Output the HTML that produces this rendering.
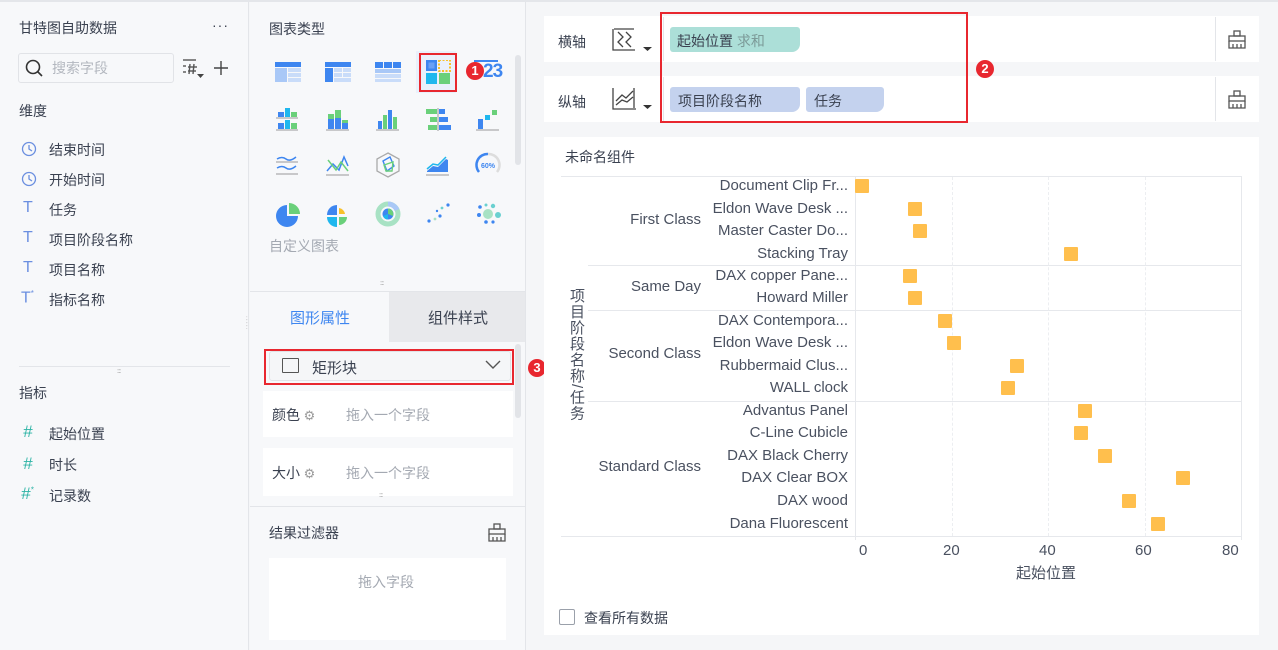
<!DOCTYPE html>
<html><head><meta charset="utf-8"><style>
*{margin:0;padding:0;box-sizing:border-box}
body{width:1278px;height:650px;overflow:hidden;background:#f5f6f8;font-family:"Liberation Sans","Noto Sans CJK SC",sans-serif;color:#3a4150;font-size:14px;position:relative}
.a{position:absolute;white-space:nowrap}
.g{color:#9aa0aa}
.ic{position:absolute}
.sq{position:absolute;width:14px;height:14px;background:#ffbf4d;border-radius:1px}
.yl{position:absolute;right:0;font-size:15px;color:#4a5160;text-align:right;line-height:18px}
</style></head><body>
<div class="a" style="left:0;top:0;width:1278px;height:2px;background:#e4e6ea"></div>
<!-- LEFT PANEL -->
<div class="a" style="left:0;top:2px;width:249px;height:648px;background:#f7f8fa;border-right:1px solid #e3e5e9"></div>
<div class="a" style="left:19px;top:18px;font-size:14px">甘特图自助数据</div>
<div class="a" style="left:212px;top:20px;font-size:14px;letter-spacing:1px;line-height:10px">···</div>
<div class="a" style="left:18px;top:53px;width:156px;height:30px;border:1px solid #e1e3e7;border-radius:3px;background:#f7f8fa"></div>
<svg class="ic" style="left:24px;top:58px" width="20" height="20"><circle cx="9" cy="9" r="6.5" fill="none" stroke="#333" stroke-width="1.6"/><line x1="13.5" y1="13.5" x2="18" y2="18" stroke="#333" stroke-width="1.6"/></svg>
<div class="a g" style="left:52px;top:58px;color:#b3b7bf">搜索字段</div>
<svg class="ic" style="left:182px;top:58px" width="26" height="22"><g stroke="#555" stroke-width="1.4"><line x1="1" y1="2" x2="14" y2="2"/><line x1="1" y1="8" x2="4" y2="8"/><line x1="1" y1="14" x2="4" y2="14"/><line x1="8" y1="6" x2="7" y2="16"/><line x1="12" y1="6" x2="11" y2="16"/><line x1="6" y1="9" x2="15" y2="9"/><line x1="6" y1="13" x2="14" y2="13"/></g><path d="M15 16h7l-3.5 4z" fill="#444"/></svg>
<svg class="ic" style="left:213px;top:60px" width="16" height="16"><path d="M8 1v14M1 8h14" stroke="#444" stroke-width="1.4"/></svg>
<div class="a" style="left:19px;top:101px">维度</div>
<svg class="ic" style="left:21px;top:141px" width="16" height="16"><circle cx="8" cy="8" r="6.5" fill="none" stroke="#6b8fe0" stroke-width="1.3"/><path d="M8 4v4l3 2" fill="none" stroke="#6b8fe0" stroke-width="1.3"/></svg>
<div class="a" style="left:49px;top:140px">结束时间</div>
<svg class="ic" style="left:21px;top:171px" width="16" height="16"><circle cx="8" cy="8" r="6.5" fill="none" stroke="#6b8fe0" stroke-width="1.3"/><path d="M8 4v4l3 2" fill="none" stroke="#6b8fe0" stroke-width="1.3"/></svg>
<div class="a" style="left:49px;top:170px">开始时间</div>
<div class="a" style="left:23px;top:199px;color:#6b8fe0;font-size:16px">T</div><div class="a" style="left:49px;top:200px">任务</div>
<div class="a" style="left:23px;top:229px;color:#6b8fe0;font-size:16px">T</div><div class="a" style="left:49px;top:230px">项目阶段名称</div>
<div class="a" style="left:23px;top:259px;color:#6b8fe0;font-size:16px">T</div><div class="a" style="left:49px;top:260px">项目名称</div>
<div class="a" style="left:21px;top:289px;color:#6b8fe0;font-size:16px">T<sup style="font-size:8px">*</sup></div><div class="a" style="left:49px;top:290px">指标名称</div>
<div class="a" style="left:19px;top:366px;width:211px;height:1px;background:#e3e5e9"></div>
<div class="a" style="left:117px;top:369px;font-size:6px;color:#999;letter-spacing:-1px">:::::</div>
<div class="a" style="left:19px;top:383px">指标</div>
<div class="a" style="left:23px;top:422px;color:#2db3a5;font-style:italic;font-size:17px">#</div><div class="a" style="left:49px;top:424px">起始位置</div>
<div class="a" style="left:23px;top:454px;color:#2db3a5;font-style:italic;font-size:17px">#</div><div class="a" style="left:49px;top:455px">时长</div>
<div class="a" style="left:21px;top:484px;color:#2db3a5;font-style:italic;font-size:17px">#<sup style="font-size:8px">*</sup></div><div class="a" style="left:49px;top:486px">记录数</div>
<div class="a" style="left:246px;top:318px;font-size:6px;color:#999;line-height:3px">:<br>:<br>:<br>:</div>

<!-- MIDDLE PANEL -->
<div class="a" style="left:250px;top:2px;width:276px;height:648px;background:#f7f8fa;border-right:1px solid #e3e5e9"></div>
<div class="a" style="left:269px;top:19px">图表类型</div>
<div class="a" style="left:515px;top:55px;width:6px;height:110px;background:#e2e4e8;border-radius:3px"></div>
<svg class="ic" style="left:275px;top:60px" width="28" height="24"><rect x="0" y="2" width="26" height="5" fill="#3e86f0"/><rect x="0" y="8" width="12" height="14" fill="#a9c8f7"/><rect x="13" y="8" width="13" height="4" fill="#c9dcf9"/><rect x="13" y="13" width="13" height="4" fill="#c9dcf9"/><rect x="13" y="18" width="13" height="4" fill="#c9dcf9"/></svg>
<svg class="ic" style="left:325px;top:60px" width="28" height="24"><rect x="0" y="2" width="26" height="5" fill="#3e86f0"/><rect x="0" y="8" width="8" height="14" fill="#3e86f0"/><rect x="9" y="8" width="8" height="4" fill="#c9dcf9"/><rect x="18" y="8" width="8" height="4" fill="#c9dcf9"/><rect x="9" y="13" width="8" height="4" fill="#c9dcf9"/><rect x="18" y="13" width="8" height="4" fill="#c9dcf9"/><rect x="9" y="18" width="17" height="4" fill="#c9dcf9"/></svg>
<svg class="ic" style="left:375px;top:60px" width="28" height="24"><rect x="0" y="2" width="8" height="6" fill="#3e86f0"/><rect x="9" y="2" width="8" height="6" fill="#3e86f0"/><rect x="18" y="2" width="8" height="6" fill="#3e86f0"/><rect x="0" y="9" width="26" height="4" fill="#a9c8f7"/><rect x="0" y="14" width="26" height="4" fill="#c9dcf9"/><rect x="0" y="19" width="26" height="3" fill="#c9dcf9"/></svg>
<div class="a" style="left:416px;top:51px;width:40px;height:42px;background:#eaf0fb"></div>
<div class="a" style="left:419px;top:53px;width:38px;height:39px;border:2px solid #e8272f"></div>
<svg class="ic" style="left:426px;top:60px" width="26" height="26"><rect x="0" y="0" width="11" height="11" fill="#3e86f0"/><rect x="2.5" y="2.5" width="6" height="6" fill="#6aa0f5"/><rect x="13" y="0" width="11" height="11" fill="none" stroke="#f8c12a" stroke-width="2" stroke-dasharray="2 1.5"/><rect x="0" y="13" width="11" height="11" fill="#1fb7ee"/><rect x="13" y="13" width="11" height="11" fill="#6ad07a"/></svg>
<div class="a" style="left:466px;top:62px;width:18px;height:18px;border-radius:50%;background:#e8272f;color:#fff;font-size:13px;text-align:center;line-height:18px;font-weight:bold">1</div>
<div class="a" style="left:474px;top:60px;width:24px;height:2px;background:#3e86f0"></div>
<div class="a" style="left:483px;top:61px;color:#3e86f0;font-weight:bold;font-size:19px;letter-spacing:-1px">23</div>
<svg class="ic" style="left:276px;top:108px" width="26" height="24"><rect x="2" y="4" width="6" height="5" fill="#3e86f0"/><rect x="9" y="0" width="5" height="9" fill="#1fb7ee"/><rect x="15" y="4" width="6" height="5" fill="#6ad07a"/><line x1="0" y1="10" x2="22" y2="10" stroke="#999"/><rect x="2" y="15" width="6" height="6" fill="#3e86f0"/><rect x="9" y="12" width="5" height="9" fill="#1fb7ee"/><rect x="15" y="15" width="6" height="6" fill="#6ad07a"/><line x1="0" y1="22" x2="22" y2="22" stroke="#999"/></svg>
<svg class="ic" style="left:326px;top:108px" width="26" height="24"><rect x="2" y="6" width="6" height="15" fill="#3e86f0"/><rect x="2" y="6" width="6" height="5" fill="#6ad07a"/><rect x="9" y="2" width="6" height="19" fill="#3e86f0"/><rect x="9" y="2" width="6" height="8" fill="#6ad07a"/><rect x="16" y="12" width="6" height="9" fill="#3e86f0"/><rect x="16" y="12" width="6" height="3" fill="#6ad07a"/><line x1="0" y1="22" x2="23" y2="22" stroke="#999"/></svg>
<svg class="ic" style="left:376px;top:108px" width="26" height="24"><rect x="2" y="13" width="4" height="8" fill="#3e86f0"/><rect x="7" y="7" width="4" height="14" fill="#6ad07a"/><rect x="12" y="2" width="4" height="19" fill="#3e86f0"/><rect x="17" y="9" width="4" height="12" fill="#6ad07a"/><line x1="0" y1="22" x2="23" y2="22" stroke="#999"/></svg>
<svg class="ic" style="left:426px;top:108px" width="26" height="24"><rect x="0" y="1" width="11" height="5" fill="#6ad07a"/><rect x="4" y="9" width="7" height="5" fill="#6ad07a"/><rect x="2" y="17" width="9" height="5" fill="#6ad07a"/><line x1="12" y1="0" x2="12" y2="23" stroke="#999"/><rect x="13" y="1" width="6" height="5" fill="#3e86f0"/><rect x="13" y="9" width="9" height="5" fill="#3e86f0"/><rect x="13" y="17" width="12" height="5" fill="#3e86f0"/></svg>
<svg class="ic" style="left:476px;top:108px" width="26" height="24"><rect x="2" y="11" width="5" height="10" fill="#3e86f0"/><rect x="9" y="7" width="5" height="5" fill="#1fb7ee"/><rect x="16" y="2" width="5" height="5" fill="#6ad07a"/><line x1="0" y1="22" x2="23" y2="22" stroke="#999"/></svg>
<svg class="ic" style="left:276px;top:154px" width="26" height="26"><path d="M1 5 Q6 2 10 5 T20 3M1 14 Q6 11 10 14 T20 12" fill="none" stroke="#3e86f0" stroke-width="1.5"/><line x1="0" y1="8" x2="22" y2="8" stroke="#999"/><line x1="0" y1="20" x2="22" y2="20" stroke="#999"/></svg>
<svg class="ic" style="left:326px;top:154px" width="26" height="26"><path d="M1 17 L7 10 L13 16 L18 3 L22 12" fill="none" stroke="#3e86f0" stroke-width="1.5"/><path d="M2 6 L10 16 L15 8 L22 17" fill="none" stroke="#6ad07a" stroke-width="1.5"/><line x1="0" y1="21" x2="23" y2="21" stroke="#999"/></svg>
<svg class="ic" style="left:375px;top:151px" width="26" height="28"><path d="M13 2 L24 8 L24 20 L13 26 L2 20 L2 8Z" fill="none" stroke="#aaa" stroke-width="1.3"/><path d="M8 10 L15 6 L19 15 L12 20Z" fill="none" stroke="#3e86f0" stroke-width="1.4"/><path d="M9 14 L18 11 L17 20 L11 20Z" fill="none" stroke="#6ad07a" stroke-width="1.4"/></svg>
<svg class="ic" style="left:426px;top:154px" width="26" height="24"><path d="M1 17 L7 12 L12 13 L20 5 L22 6 L22 18 L1 18Z" fill="#3e86f0"/><path d="M1 15 L7 10 L12 11 L20 3" fill="none" stroke="#1fb7ee" stroke-width="1.5"/><line x1="0" y1="21" x2="23" y2="21" stroke="#999"/></svg>
<svg class="ic" style="left:474px;top:151px" width="28" height="28"><path d="M5 21 A11 11 0 0 1 14 3" fill="none" stroke="#3e86f0" stroke-width="2.5"/><path d="M14 3 A11 11 0 0 1 23 21" fill="none" stroke="#ddd" stroke-width="2.5"/><text x="14" y="17" font-size="7" font-weight="bold" fill="#3e86f0" text-anchor="middle" font-family="Liberation Sans">60%</text></svg>
<svg class="ic" style="left:275px;top:202px" width="26" height="26"><path d="M12 3 A11 11 0 1 0 23 14 L12 14Z" fill="#3e86f0"/><path d="M14 1 A11 11 0 0 1 25 12 L14 12Z" fill="#6ad07a"/></svg>
<svg class="ic" style="left:325px;top:202px" width="26" height="26"><path d="M12 3 A10 10 0 0 0 2 13 L12 13Z" fill="#3e86f0"/><path d="M14 6 A7 7 0 0 1 20 12 L14 12Z" fill="#f8c12a"/><path d="M2 15 A10 10 0 0 0 12 25 L12 15Z" fill="#1fb7ee"/><path d="M14 15 L22 15 A8 8 0 0 1 14 23Z" fill="#6ad07a"/></svg>
<svg class="ic" style="left:375px;top:201px" width="26" height="26"><circle cx="13" cy="13" r="10" fill="none" stroke="#a8e2c4" stroke-width="5"/><path d="M13 3 A10 10 0 0 1 22 9" fill="none" stroke="#a9c8f7" stroke-width="5"/><circle cx="13" cy="13" r="5.5" fill="#3e86f0"/><path d="M13 13 L13 7.5 A5.5 5.5 0 0 1 18 15Z" fill="#6ad07a"/><path d="M13 13 L8 15 A5.5 5.5 0 0 0 13 18.5Z" fill="#1fb7ee"/></svg>
<svg class="ic" style="left:426px;top:203px" width="26" height="22"><g fill="#3e86f0"><circle cx="3" cy="18" r="1.6"/><circle cx="14" cy="13" r="1.6"/><circle cx="22" cy="2" r="1.6"/><circle cx="16" cy="5" r="1.4" fill="#6ad0d0"/><circle cx="9" cy="16" r="1.4" fill="#a8e2c4"/><circle cx="11" cy="8" r="1.2"/></g></svg>
<svg class="ic" style="left:476px;top:202px" width="26" height="24"><g fill="#3e86f0"><circle cx="4" cy="5" r="1.8"/><circle cx="3" cy="13" r="2"/><circle cx="10" cy="20" r="1.8"/><circle cx="17" cy="20" r="1.6"/><circle cx="10" cy="3" r="1.5" fill="#6ad0d0"/><circle cx="17" cy="4" r="2.2" fill="#6ad0d0"/><circle cx="22" cy="13" r="3" fill="#6ad0d0"/><circle cx="12" cy="12" r="5" fill="#a8e2c4"/></g></svg>
<div class="a" style="left:269px;top:236px;color:#a4a9b2">自定义图表</div>
<div class="a" style="left:380px;top:281px;font-size:6px;color:#999;letter-spacing:-1px">:::::</div>
<div class="a" style="left:250px;top:291px;width:276px;height:1px;background:#e3e5e9"></div>
<div class="a" style="left:389px;top:292px;width:136px;height:50px;background:#e8e9ec"></div>
<div class="a" style="left:290px;top:307px;color:#3e86f0;font-size:15px">图形属性</div>
<div class="a" style="left:428px;top:307px;font-size:15px">组件样式</div>
<div class="a" style="left:515px;top:344px;width:6px;height:74px;background:#e2e4e8;border-radius:3px"></div>
<div class="a" style="left:269px;top:351px;width:242px;height:30px;background:#f5f6f8;border:1px solid #e1e3e7;border-radius:3px"></div>
<div class="a" style="left:264px;top:349px;width:250px;height:36px;border:2px solid #e8272f"></div>
<div class="a" style="left:282px;top:358px;width:17px;height:15px;border:1.5px solid #555;border-radius:1px"></div>
<div class="a" style="left:312px;top:357px;font-size:15px">矩形块</div>
<svg class="ic" style="left:485px;top:360px" width="16" height="10"><path d="M1 1 L8 8 L15 1" fill="none" stroke="#555" stroke-width="1.4"/></svg>
<div class="a" style="left:528px;top:359px;width:18px;height:18px;border-radius:50%;background:#e8272f;color:#fff;font-size:13px;text-align:center;line-height:18px;font-weight:bold">3</div>
<div class="a" style="left:263px;top:391px;width:250px;height:46px;background:#fff"></div>
<div class="a" style="left:272px;top:405px">颜色<span style="color:#999;font-size:13px"> ⚙</span></div>
<div class="a" style="left:346px;top:405px;color:#a4a9b2">拖入一个字段</div>
<div class="a" style="left:263px;top:448px;width:250px;height:48px;background:#fff"></div>
<div class="a" style="left:272px;top:463px">大小<span style="color:#999;font-size:13px"> ⚙</span></div>
<div class="a" style="left:346px;top:463px;color:#a4a9b2">拖入一个字段</div>
<div class="a" style="left:379px;top:493px;font-size:6px;color:#999;letter-spacing:-1px">:::::</div>
<div class="a" style="left:250px;top:506px;width:276px;height:1px;background:#e3e5e9"></div>
<div class="a" style="left:269px;top:523px">结果过滤器</div>
<svg class="ic" style="left:487px;top:523px" width="20" height="20"><g fill="none" stroke="#555" stroke-width="1.3"><rect x="7" y="1" width="6" height="5"/><rect x="2" y="6" width="16" height="5"/><path d="M2 11v7h16v-7M6 14v4M10 14v4M14 14v4"/></g></svg>
<div class="a" style="left:269px;top:558px;width:237px;height:82px;background:#fff"></div>
<div class="a" style="left:358px;top:572px;color:#a4a9b2">拖入字段</div>

<!-- RIGHT TOP CARDS -->
<div class="a" style="left:544px;top:16px;width:715px;height:46px;background:#fff"></div>
<div class="a" style="left:544px;top:76px;width:715px;height:46px;background:#fff"></div>
<div class="a" style="left:558px;top:32px">横轴</div>
<div class="a" style="left:558px;top:92px">纵轴</div>
<svg class="ic" style="left:612px;top:28px" width="42" height="26"><g fill="none" stroke="#444" stroke-width="1.3"><path d="M1 1 V22 H23"/><path d="M6 4 L11 9 L6 14 L11 19"/><path d="M14 4 L19 9 L14 14 L19 19"/><path d="M2 1h20"/></g><path d="M31 19 h9 l-4.5 4z" fill="#333"/></svg>
<svg class="ic" style="left:612px;top:87px" width="42" height="26"><g fill="none" stroke="#444" stroke-width="1.3"><path d="M1 1 V22 H24"/><path d="M4 14 L10 8 L14 11 L21 4"/><path d="M4 18 L10 13 L15 15 L21 10"/><path d="M22 1 v20"/></g><path d="M31 18 h9 l-4.5 4z" fill="#333"/></svg>
<div class="a" style="left:663px;top:17px;width:1px;height:44px;background:#e3e5e9"></div>
<div class="a" style="left:663px;top:77px;width:1px;height:44px;background:#e3e5e9"></div>
<div class="a" style="left:670px;top:27px;width:130px;height:25px;background:#acdfd8;border-radius:3px 3px 8px 3px"></div>
<div class="a" style="left:677px;top:31px">起始位置 <span style="color:#7c9a98">求和</span></div>
<div class="a" style="left:670px;top:87px;width:130px;height:25px;background:#c4d2ee;border-radius:3px 3px 8px 3px"></div>
<div class="a" style="left:678px;top:91px">项目阶段名称</div>
<div class="a" style="left:806px;top:87px;width:78px;height:25px;background:#c4d2ee;border-radius:3px 3px 8px 3px"></div>
<div class="a" style="left:814px;top:91px">任务</div>
<div class="a" style="left:660px;top:12px;width:308px;height:111px;border:2px solid #e8272f"></div>
<div class="a" style="left:976px;top:60px;width:18px;height:18px;border-radius:50%;background:#e8272f;color:#fff;font-size:13px;text-align:center;line-height:18px;font-weight:bold">2</div>
<div class="a" style="left:1215px;top:17px;width:1px;height:44px;background:#e3e5e9"></div>
<div class="a" style="left:1215px;top:77px;width:1px;height:44px;background:#e3e5e9"></div>
<svg class="ic" style="left:1227px;top:30px" width="20" height="20"><g fill="none" stroke="#555" stroke-width="1.3"><rect x="7" y="1" width="6" height="5"/><rect x="2" y="6" width="16" height="5"/><path d="M2 11v7h16v-7M6 14v4M10 14v4M14 14v4"/></g></svg>
<svg class="ic" style="left:1227px;top:90px" width="20" height="20"><g fill="none" stroke="#555" stroke-width="1.3"><rect x="7" y="1" width="6" height="5"/><rect x="2" y="6" width="16" height="5"/><path d="M2 11v7h16v-7M6 14v4M10 14v4M14 14v4"/></g></svg>

<!-- CHART CARD -->
<div class="a" style="left:544px;top:137px;width:715px;height:498px;background:#fff"></div>
<div class="a" style="left:565px;top:147px">未命名组件</div>
<div class="a" style="left:561px;top:176px;width:681px;height:1px;background:#e6e8ec"></div>
<div class="a" style="left:561px;top:536px;width:681px;height:1px;background:#e6e8ec"></div>
<div class="a" style="left:588px;top:265px;width:654px;height:1px;background:#e6e8ec"></div>
<div class="a" style="left:588px;top:310px;width:654px;height:1px;background:#e6e8ec"></div>
<div class="a" style="left:588px;top:401px;width:654px;height:1px;background:#e6e8ec"></div>
<div class="a" style="left:855px;top:176px;width:1px;height:364px;background:#e6e8ec"></div>
<div class="a" style="left:1241px;top:176px;width:1px;height:364px;background:#e6e8ec"></div>
<div class="a" style="left:952px;top:177px;width:0;height:359px;border-left:1px dashed #eceef1"></div>
<div class="a" style="left:1048px;top:177px;width:0;height:359px;border-left:1px dashed #eceef1"></div>
<div class="a" style="left:1145px;top:177px;width:0;height:359px;border-left:1px dashed #eceef1"></div>
<div class="a" style="left:567px;top:288px;writing-mode:vertical-rl;font-size:15px;line-height:18px;color:#4a5160;letter-spacing:1px">项目阶段名称/任务</div>
<div class="a" style="left:560px;top:0;width:288px;height:650px">
<div class="yl" style="top:177px">Document Clip Fr...</div>
<div class="yl" style="top:200px">Eldon Wave Desk ...</div>
<div class="yl" style="top:222px">Master Caster Do...</div>
<div class="yl" style="top:245px">Stacking Tray</div>
<div class="yl" style="top:267px">DAX copper Pane...</div>
<div class="yl" style="top:289px">Howard Miller</div>
<div class="yl" style="top:312px">DAX Contempora...</div>
<div class="yl" style="top:334px">Eldon Wave Desk ...</div>
<div class="yl" style="top:357px">Rubbermaid Clus...</div>
<div class="yl" style="top:379px">WALL clock</div>
<div class="yl" style="top:402px">Advantus Panel</div>
<div class="yl" style="top:424px">C-Line Cubicle</div>
<div class="yl" style="top:447px">DAX Black Cherry</div>
<div class="yl" style="top:469px">DAX Clear BOX</div>
<div class="yl" style="top:492px">DAX wood</div>
<div class="yl" style="top:515px">Dana Fluorescent</div>
</div>
<div class="a" style="left:560px;top:0;width:141px;height:650px">
<div class="yl" style="top:211px">First Class</div>
<div class="yl" style="top:278px">Same Day</div>
<div class="yl" style="top:345px">Second Class</div>
<div class="yl" style="top:458px">Standard Class</div>
</div>
<div class="sq" style="left:855px;top:179px"></div>
<div class="sq" style="left:908px;top:202px"></div>
<div class="sq" style="left:913px;top:224px"></div>
<div class="sq" style="left:1064px;top:247px"></div>
<div class="sq" style="left:903px;top:269px"></div>
<div class="sq" style="left:908px;top:291px"></div>
<div class="sq" style="left:938px;top:314px"></div>
<div class="sq" style="left:947px;top:336px"></div>
<div class="sq" style="left:1010px;top:359px"></div>
<div class="sq" style="left:1001px;top:381px"></div>
<div class="sq" style="left:1078px;top:404px"></div>
<div class="sq" style="left:1074px;top:426px"></div>
<div class="sq" style="left:1098px;top:449px"></div>
<div class="sq" style="left:1176px;top:471px"></div>
<div class="sq" style="left:1122px;top:494px"></div>
<div class="sq" style="left:1151px;top:517px"></div>
<div class="a" style="left:859px;top:542px;color:#4a5160;font-size:15px">0</div>
<div class="a" style="left:943px;top:542px;color:#4a5160;font-size:15px">20</div>
<div class="a" style="left:1039px;top:542px;color:#4a5160;font-size:15px">40</div>
<div class="a" style="left:1135px;top:542px;color:#4a5160;font-size:15px">60</div>
<div class="a" style="left:1222px;top:542px;color:#4a5160;font-size:15px">80</div>
<div class="a" style="left:1016px;top:562px;color:#4a5160;font-size:15px">起始位置</div>
<div class="a" style="left:559px;top:609px;width:16px;height:16px;border:1px solid #9aa0aa;border-radius:2px"></div>
<div class="a" style="left:584px;top:608px">查看所有数据</div>
</body></html>
